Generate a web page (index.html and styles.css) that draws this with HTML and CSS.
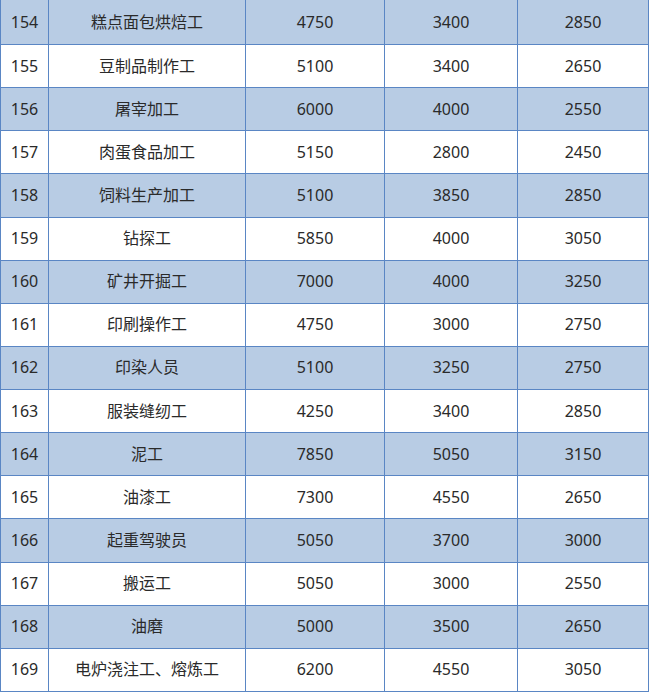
FILE: index.html
```html
<!DOCTYPE html>
<html lang="zh-CN">
<head>
<meta charset="utf-8">
<title>工种工资表</title>
<link rel="stylesheet" href="styles.css">
</head>
<body>
<div class="sheet">
  <div class="row alt"><div class="c">154</div><div class="c">糕点面包烘焙工</div><div class="c">4750</div><div class="c">3400</div><div class="c">2850</div></div>
  <div class="row"><div class="c">155</div><div class="c">豆制品制作工</div><div class="c">5100</div><div class="c">3400</div><div class="c">2650</div></div>
  <div class="row alt"><div class="c">156</div><div class="c">屠宰加工</div><div class="c">6000</div><div class="c">4000</div><div class="c">2550</div></div>
  <div class="row"><div class="c">157</div><div class="c">肉蛋食品加工</div><div class="c">5150</div><div class="c">2800</div><div class="c">2450</div></div>
  <div class="row alt"><div class="c">158</div><div class="c">饲料生产加工</div><div class="c">5100</div><div class="c">3850</div><div class="c">2850</div></div>
  <div class="row"><div class="c">159</div><div class="c">钻探工</div><div class="c">5850</div><div class="c">4000</div><div class="c">3050</div></div>
  <div class="row alt"><div class="c">160</div><div class="c">矿井开掘工</div><div class="c">7000</div><div class="c">4000</div><div class="c">3250</div></div>
  <div class="row"><div class="c">161</div><div class="c">印刷操作工</div><div class="c">4750</div><div class="c">3000</div><div class="c">2750</div></div>
  <div class="row alt"><div class="c">162</div><div class="c">印染人员</div><div class="c">5100</div><div class="c">3250</div><div class="c">2750</div></div>
  <div class="row"><div class="c">163</div><div class="c">服装缝纫工</div><div class="c">4250</div><div class="c">3400</div><div class="c">2850</div></div>
  <div class="row alt"><div class="c">164</div><div class="c">泥工</div><div class="c">7850</div><div class="c">5050</div><div class="c">3150</div></div>
  <div class="row"><div class="c">165</div><div class="c">油漆工</div><div class="c">7300</div><div class="c">4550</div><div class="c">2650</div></div>
  <div class="row alt"><div class="c">166</div><div class="c">起重驾驶员</div><div class="c">5050</div><div class="c">3700</div><div class="c">3000</div></div>
  <div class="row"><div class="c">167</div><div class="c">搬运工</div><div class="c">5050</div><div class="c">3000</div><div class="c">2550</div></div>
  <div class="row alt"><div class="c">168</div><div class="c">油磨</div><div class="c">5000</div><div class="c">3500</div><div class="c">2650</div></div>
  <div class="row"><div class="c">169</div><div class="c">电炉浇注工、熔炼工</div><div class="c">6200</div><div class="c">4550</div><div class="c">3050</div></div>
</div>
</body>
</html>
```
FILE: styles.css
```css
html, body {
  margin: 0;
  padding: 0;
  background: #ffffff;
}

.sheet {
  display: grid;
  grid-template-rows: 44px repeat(15, 42.13px);
  row-gap: 1px;
  width: 649px;
  background: #5a86c4;
  padding: 0 0 1px 0;
  box-sizing: border-box;
  font-family: "Noto Sans", "Noto Sans CJK SC", sans-serif;
  font-size: 16px;
  color: #2a2a2a;
}

.row {
  display: grid;
  grid-template-columns: 47px 196px 138px 132px 130px;
  column-gap: 1px;
  padding: 0 1px;
}

.c {
  display: flex;
  align-items: center;
  justify-content: center;
  background: #ffffff;
  line-height: 1;
  padding-bottom: 1px;
}

.alt .c {
  background: #b8cce4;
}
```
